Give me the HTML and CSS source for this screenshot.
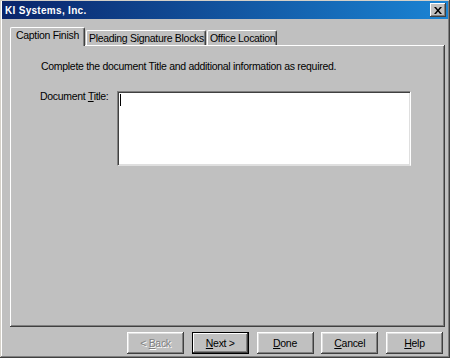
FILE: index.html
```html
<html>
<head>
  <title>KI Systems, Inc.</title>
  <meta charset="utf-8">
  <link rel="stylesheet" href="styles.css">
</head>
<body>

<div class="window">
  <div class="titlebar">
    <span class="title">KI Systems, Inc.</span>
    <span class="close">
      <svg width="8" height="7" viewBox="0 0 8 7">
        <path d="M0 0h2l2 2.5L6 0h2L5 3.5 8 7H6L4 4.5 2 7H0l3-3.5z" fill="#000"/>
      </svg>
    </span>
  </div>

  <div class="tabs">
    <div class="tab active">Caption Finish</div>
    <div class="tab">Pleading Signature Blocks</div>
    <div class="tab">Office Location</div>
  </div>

  <div class="panel">
    <p class="intro">Complete the document Title and additional information as required.</p>
    <div class="field">
      <label class="label">Document <u>T</u>itle:</label>
      <div class="textbox"><span class="caret"></span></div>
    </div>
  </div>

  <div class="buttons">
    <div class="btn disabled">&lt;&nbsp;<u>B</u>ack</div>
    <div class="btn default"><u>N</u>ext &gt;</div>
    <div class="btn"><u>D</u>one</div>
    <div class="btn"><u>C</u>ancel</div>
    <div class="btn"><u>H</u>elp</div>
  </div>
</div>

</body>
</html>
```

FILE: styles.css
```css
html, body {
	margin: 0;
	padding: 0;
	background: #c0c0c0;
}

.window {
	box-sizing: border-box;
	width: 450px;
	height: 358px;
	padding: 1px 2px 2px 2px;
	background: #c0c0c0;
	font-family: "Liberation Sans", Arial, sans-serif;
	font-size: 10.5px;
	letter-spacing: -0.3px;
	color: #000;
	box-shadow: inset -1px -1px #404040, inset 1px 1px #d4d0c8,
		inset -2px -2px #808080, inset 2px 2px #fff;
	display: flex;
	flex-direction: column;
}

.titlebar {
	height: 18px;
	background: linear-gradient(to right, #0a246a, #1a84d4);
	display: flex;
	align-items: center;
	justify-content: space-between;
	padding: 0 2px 0 3px;
}

.title {
	color: #fff;
	font-weight: bold;
	font-size: 10px;
	letter-spacing: 0.3px;
}

.close {
	box-sizing: border-box;
	width: 16px;
	height: 14px;
	background: #c0c0c0;
	display: flex;
	align-items: center;
	justify-content: center;
	box-shadow: inset -1px -1px #404040, inset 1px 1px #fff,
		inset -2px -2px #808080;
}

.tabs {
	display: flex;
	align-items: flex-end;
	height: 18px;
	margin: 8px 0 0 8px;
	position: relative;
	z-index: 1;
}

.tab {
	box-sizing: border-box;
	height: 15px;
	padding: 0 1px 0 2px;
	line-height: 14px;
	background: #c0c0c0;
	border-top: 1px solid #fff;
	border-left: 1px solid #fff;
	border-right: 1px solid #404040;
	box-shadow: inset -1px 0 #808080;
	border-radius: 2px 2px 0 0;
	margin-left: 1px;
}

.tab.active {
	height: 19px;
	margin: 0 0 -1px 0;
	padding: 0 5px;
	line-height: 15px;
	border-bottom: none;
}

.panel {
	box-sizing: border-box;
	width: 435px;
	height: 282px;
	margin-left: 8px;
	box-shadow: inset -1px -1px #404040, inset 1px 1px #fff,
		inset -2px -2px #808080;
	padding: 15px 0 0 31px;
}

.intro {
	margin: 0;
	line-height: 13px;
}

.field {
	display: flex;
	align-items: flex-start;
	margin-top: 18px;
}

.label {
	width: 77px;
	margin: -1px 0 0 -1px;
	line-height: 13px;
}

.textbox {
	box-sizing: border-box;
	width: 294px;
	height: 75px;
	background: #fff;
	border-top: 1px solid #808080;
	border-left: 1px solid #808080;
	border-right: 1px solid #fff;
	border-bottom: 1px solid #dfdfdf;
	box-shadow: inset 1px 1px #404040, inset -1px -1px #dfdfdf;
	padding: 2px 0 0 2px;
}

.caret {
	display: block;
	width: 1px;
	height: 12px;
	background: #000;
}

.buttons {
	display: flex;
	justify-content: flex-end;
	gap: 7.75px;
	margin-top: 5px;
	padding-right: 5px;
}

.btn {
	box-sizing: border-box;
	width: 57px;
	height: 22px;
	display: flex;
	align-items: center;
	justify-content: center;
	box-shadow: inset -1px -1px #404040, inset 1px 1px #fff,
		inset -2px -2px #808080, inset 2px 2px #dfdfdf;
}

.btn.default {
	border: 1px solid #000;
	box-shadow: inset -1px -1px #404040, inset 1px 1px #fff,
		inset -2px -2px #808080;
}

.btn.disabled {
	color: #808080;
	text-shadow: 1px 1px #fff;
}
```
